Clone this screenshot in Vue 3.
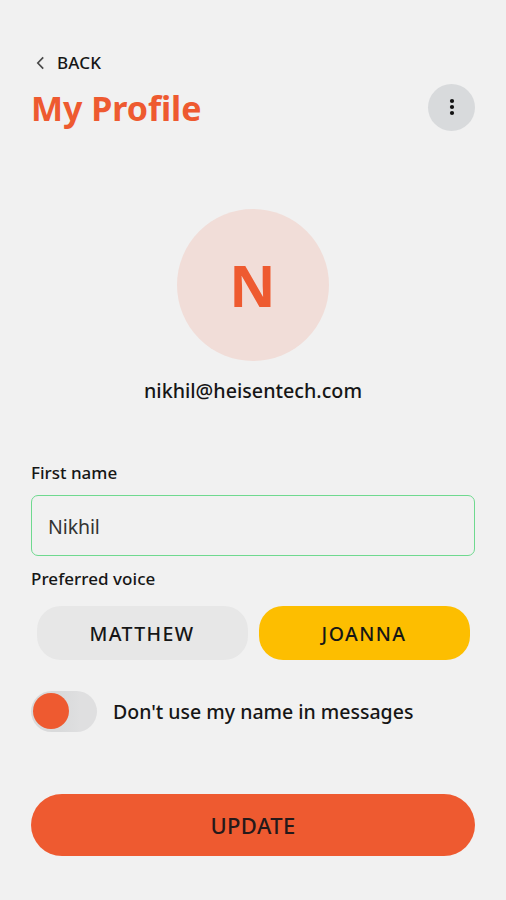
<script setup>
import { ref } from 'vue'
const name = ref('Nikhil')
const voice = ref('JOANNA')
const voices = ['MATTHEW', 'JOANNA']
const hidden = ref(false)
</script>

<template>
  <main class="page">
    <button class="back">
      <svg width="9" height="14" viewBox="0 0 9 14"><path d="M7.2 1.3 1.8 7 7.2 12.7" fill="none" stroke="#4a4a4a" stroke-width="1.7" /></svg>
      <span class="back-text">BACK</span>
    </button>
    <header class="head">
      <h1 class="title">My Profile</h1>
      <button class="more" aria-label="More">
        <svg width="6" height="18" viewBox="0 0 6 18" fill="#111"><circle cx="3" cy="3" r="2.1" /><circle cx="3" cy="9" r="2.1" /><circle cx="3" cy="15" r="2.1" /></svg>
      </button>
    </header>
    <div class="avatar"><span class="initial">N</span></div>
    <div class="email"><span class="email-text">nikhil@heisentech.com</span></div>
    <label class="label"><span class="first-text">First name</span></label>
    <div class="field"><span class="value">{{ name }}</span></div>
    <div class="label voice-label"><span class="voice-text">Preferred voice</span></div>
    <div class="voices">
      <button v-for="v in voices" :key="v" class="voice" :class="{ active: v === voice }" @click="voice = v"><span>{{ v }}</span></button>
    </div>
    <div class="toggle-row">
      <button class="switch" :class="{ on: hidden }" aria-label="Toggle" @click="hidden = !hidden"><span class="knob"></span></button>
      <span class="toggle-text">Don't use my name in messages</span>
    </div>
    <button class="update"><span>UPDATE</span></button>
  </main>
</template>

<style>
body { background: #f1f1f1; }
</style>
<style scoped>
.page { box-sizing: border-box; width: 506px; height: 900px; padding: 50px 31px 0; background: #f1f1f1; font-family: "Noto Sans", "Open Sans", sans-serif; color: #161616; display: flex; flex-direction: column; font-weight: 500; }
button { border: 0; padding: 0; background: none; font: inherit; color: inherit; }
.back { display: flex; align-items: center; height: 25px; gap: 12px; padding-left: 5px; font-size: 17px; letter-spacing: 0.15px; }
.head { display: flex; justify-content: space-between; height: 48px; margin-top: 8px; align-items: center; }
.title { margin: 0; padding: 1px 0 0; font-size: 34px; font-weight: 700; letter-spacing: -0.05px; color: #ee5a30; line-height: 48px; }
.more { width: 47px; height: 47px; border-radius: 50%; background: #d8dadc; display: flex; align-items: center; justify-content: center; }
.avatar { width: 152px; height: 152px; margin: 77.5px auto 0; border-radius: 50%; background: #f1ddd8; display: flex; align-items: center; justify-content: center; color: #ee5a30; font-size: 57px; font-weight: 700; }
.initial { margin-right: 1px; }
.email { display: flex; justify-content: center; height: 30px; line-height: 30px; margin-top: 15.5px; font-size: 19.7px; white-space: nowrap; }
.label { height: 24px; line-height: 24px; margin-top: 55px; font-size: 17px; display: flex; }
.field { box-sizing: border-box; height: 61px; margin-top: 10px; border: 1.5px solid #6fd98f; border-radius: 7px; padding: 1px 0 0 16px; display: flex; align-items: center; font-size: 19.5px; font-weight: 400; letter-spacing: -0.1px; color: #333; }
.voice-label { margin-top: 11px; letter-spacing: 0.05px; }
.voices { display: grid; grid-template-columns: 1fr 1fr; gap: 11px; height: 54px; margin: 15px 5px 0 6px; }
.voice { border-radius: 24px; background: #e7e7e7; font-size: 19.5px; letter-spacing: 1.4px; }
.voice span { margin-right: 1px; }
.voice.active { background: #fdbe00; }
.toggle-row { display: flex; align-items: center; height: 41px; margin-top: 31px; gap: 16px; }
.switch { width: 66px; height: 41px; border-radius: 21px; background: linear-gradient(90deg, #d9dadb 45%, #dfdfe0 75%); padding: 0 2px 1px; display: flex; align-items: center; }
.switch.on { justify-content: flex-end; }
.knob { width: 36px; height: 36px; border-radius: 50%; background: #ee5a30; }
.toggle-text { font-size: 19.5px; white-space: nowrap; }
.update { height: 62px; margin-top: 62px; border-radius: 31px; background: #ee5a30; font-size: 22px; letter-spacing: 0.4px; color: #25191a; }
</style>
